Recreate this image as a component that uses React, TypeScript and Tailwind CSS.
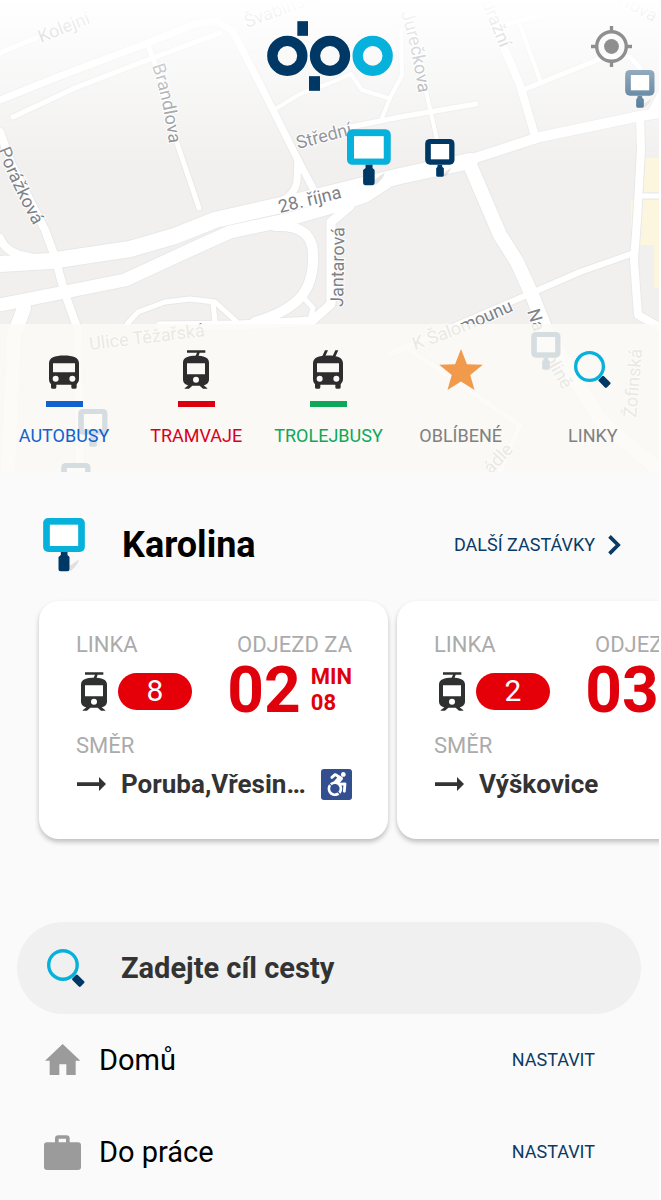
import type { ComponentType, SVGProps } from "react";
import { FaAccessibleIcon } from "react-icons/fa";

type IconProps = SVGProps<SVGSVGElement>;

const NAVY = "#003865";
const CYAN = "#06b1dc";

function Logo(props: IconProps) {
  return (
    <svg viewBox="0 0 378 209" fill="none" role="img" aria-label="dpo" {...props}>
      <g stroke={NAVY} strokeWidth={31}>
        <circle cx={61} cy={104} r={45} />
        <circle cx={189} cy={104} r={45} />
      </g>
      <circle cx={317} cy={104} r={45} stroke={CYAN} strokeWidth={31} />
      <rect x={91} width={32} height={44} fill={NAVY} />
      <rect x={126} y={165} width={33} height={44} fill={NAVY} />
    </svg>
  );
}

function LocateIcon(props: IconProps) {
  return (
    <svg viewBox="0 0 122 122" fill="none" aria-hidden="true" {...props}>
      <circle cx={61} cy={61} r={44} stroke="currentColor" strokeWidth={10} />
      <circle cx={61} cy={61} r={22} fill="currentColor" />
      <path d="M61 0v17M61 105v17M0 61h17M105 61h17" stroke="currentColor" strokeWidth={10} />
    </svg>
  );
}

function StopIcon({ frame = CYAN, handle = NAVY, ...props }: IconProps & { frame?: string; handle?: string }) {
  return (
    <svg viewBox="0 0 140 162" aria-hidden="true" {...props}>
      <path d="M79 158V144L108 124Q104 142 84 158z" fill="#000" opacity={0.1} />
      <rect width={125} height={102} rx={15} fill={frame} />
      <rect x={20} y={20} width={85} height={64} fill="#fff" />
      <path d="M53 102h20v9l6 6v37q0 6-6 6H52q-6 0-6-6v-37l7-6z" fill={handle} />
    </svg>
  );
}

// Same post as StopIcon, with the thicker and rounder frame used at small sizes.
function SmallStopIcon(props: IconProps) {
  return (
    <svg viewBox="0 0 98 114" width={33} height={38} fill={NAVY} aria-hidden="true" {...props}>
      <path d="M55 112V102L78 86Q76 98 60 112z" fill="#000" opacity={0.1} />
      <rect width={88} height={77} rx={14} />
      <rect x={17} y={15} width={55} height={46} fill="#fff" />
      <path d="M37 77h14v6l5 5v21q0 4-4 4H37q-4 0-4-4V88l4-5z" />
    </svg>
  );
}

function BusIcon(props: IconProps) {
  return (
    <svg viewBox="0 0 90 116" fill="currentColor" aria-hidden="true" {...props}>
      <path
        fillRule="evenodd"
        d="M45 16c28 0 45 6 45 24v46c0 8-3 12-7 16v9q0 5-5 5h-6q-5 0-5-5v-7H22v7q0 5-5 5h-6q-5 0-5-5v-9c-4-4-6-8-6-16V40C0 22 17 16 45 16zM12 39v27h66V39zM20 77a9 9 0 100 18 9 9 0 000-18zM70 77a9 9 0 100 18 9 9 0 000-18z"
      />
    </svg>
  );
}

function TrolleyIcon(props: IconProps) {
  return (
    <svg viewBox="0 0 90 116" fill="currentColor" aria-hidden="true" {...props}>
      <path d="M36 0h9l-9 20h-9zM67 0h9l-9 20h-9z" />
      <path
        fillRule="evenodd"
        d="M45 16c28 0 45 6 45 24v46c0 8-3 12-7 16v9q0 5-5 5h-6q-5 0-5-5v-7H22v7q0 5-5 5h-6q-5 0-5-5v-9c-4-4-6-8-6-16V40C0 22 17 16 45 16zM12 39v27h66V39zM20 77a9 9 0 100 18 9 9 0 000-18zM70 77a9 9 0 100 18 9 9 0 000-18z"
      />
    </svg>
  );
}

function TramIcon(props: IconProps) {
  return (
    <svg viewBox="0 0 78 116" fill="currentColor" aria-hidden="true" {...props}>
      <path d="M12 0h55v8H50l-4 11h-9l5-11H12z" />
      <path
        fillRule="evenodd"
        d="M39 17c22 0 39 5 39 20v51c0 9-6 16-16 17l11 9v2H60l-10-9H28l-10 9H5v-2l11-9C6 104 0 97 0 88V37c0-15 17-20 39-20zM12 39v33h54V39zM39 80a9 9 0 100 18 9 9 0 000-18z"
      />
    </svg>
  );
}

function StarIcon(props: IconProps) {
  return (
    <svg viewBox="0 0 132 124" fill="#f29a4b" aria-hidden="true" {...props}>
      <path d="M66 0l18 46 48 2-38 31 13 45-41-26-41 26 13-45L0 48l48-2z" />
    </svg>
  );
}

function SearchIcon(props: IconProps) {
  return (
    <svg viewBox="0 0 112 112" fill="none" aria-hidden="true" {...props}>
      <circle cx={47} cy={47} r={42} stroke={CYAN} strokeWidth={10} />
      <rect x={-11} y={-18} width={22} height={34} rx={4} fill={NAVY} transform="translate(93 94) rotate(-45)" />
    </svg>
  );
}

function ArrowIcon(props: IconProps) {
  return (
    <svg viewBox="0 0 87 42" fill="currentColor" aria-hidden="true" {...props}>
      <path d="M0 16h66V0l21 21-21 21V27H0z" />
    </svg>
  );
}

function ChevronIcon(props: IconProps) {
  return (
    <svg viewBox="0 0 38 60" fill="none" aria-hidden="true" {...props}>
      <path d="M4 4l26 26L4 56" stroke="currentColor" strokeWidth={11} />
    </svg>
  );
}

function HomeIcon(props: IconProps) {
  return (
    <svg viewBox="0 0 111 111" fill="currentColor" aria-hidden="true" {...props}>
      <path d="M56 6l53 50H95v43H67V67H46v32H17V56H3z" />
    </svg>
  );
}

function BriefcaseIcon(props: IconProps) {
  return (
    <svg viewBox="0 0 111 111" fill="currentColor" aria-hidden="true" {...props}>
      <path
        fillRule="evenodd"
        d="M33 25V14q0-10 10-10h24q10 0 10 10v11h25q9 0 9 9v65q0 9-9 9H9q-9 0-9-9V34q0-9 9-9zM44 14v11h22V14z"
      />
    </svg>
  );
}

const roads: { d: string; w: number }[] = [
  { d: "M0 53L36 38", w: 5 },
  { d: "M0 100L60 76L140 46L195 24L215 21L232 30L240 45L272 108L297 158L316 194", w: 7 },
  { d: "M298 160L297 180Q296 194 280 202", w: 7 },
  { d: "M13 117L75 88L150 59L220 33", w: 5 },
  { d: "M147 42L158 72L176 140L199 208", w: 5 },
  { d: "M0 132L12 165L45 230L55 257L63 287L69 305L78 330L80 472", w: 8 },
  { d: "M0 238Q6 254 30 257", w: 8 },
  { d: "M0 264L50 261L130 249L175 236L215 220L250 212L290 203L340 191L400 176L470 161", w: 16 },
  { d: "M460 164L475 158L540 137L640 116L661 113", w: 10 },
  { d: "M0 305L60 293L125 280L190 250L230 232L290 219L335 206L365 196L385 183", w: 13 },
  { d: "M275 226Q313 224 313 255Q314 282 300 298Q284 314 255 322", w: 10 },
  { d: "M24 308L14 335L8 472", w: 14 },
  { d: "M303 297L313 308L310 320", w: 5 },
  { d: "M127 324L138 312L165 302L190 299L215 302L237 322", w: 5 },
  { d: "M213 303L215 322", w: 5 },
  { d: "M160 326L240 325L312 321L331 304L331 222L350 206", w: 9 },
  { d: "M277 108L300 94L330 83L351 74L362 90L388 98", w: 4 },
  { d: "M401 30L402 75L390 98L382 118", w: 4 },
  { d: "M345 128L400 117L476 104", w: 5 },
  { d: "M412 30L428 100L437 140", w: 4 },
  { d: "M485 0L503 45L520 85L535 136", w: 8 },
  { d: "M523 90L560 75L605 57L630 57L640 68", w: 5 },
  { d: "M520 25L540 80", w: 4 },
  { d: "M505 25L540 15", w: 4 },
  { d: "M470 165L485 200L500 235L517 262L532 295L548 335L600 420L661 472", w: 14 },
  { d: "M390 354L520 298L580 272L634 253", w: 6 },
  { d: "M640 116L641 150L637 220L634 260L638 315L661 328", w: 8 },
  { d: "M640 196L661 196", w: 5 },
  { d: "M661 95L652 112", w: 8 },
  { d: "M410 350L520 425L500 472", w: 5 },
];

const streets = [
  { id: "kolejni", name: "Kolejní", d: "M41 43L120 11" },
  { id: "svabinskeho", name: "Švabinského", d: "M247 28L350 -10" },
  { id: "brandlova", name: "Brandlova", d: "M152 66Q165 104 171 160" },
  { id: "porazkova", name: "Porážková", d: "M-2 150Q14 192 44 244" },
  { id: "stredni", name: "Střední", d: "M298 149L370 130" },
  { id: "rijna", name: "28. října", d: "M280 213L370 191" },
  { id: "jureckova", name: "Jurečkova", d: "M401 13Q413 50 421 110" },
  { id: "nadrazni", name: "Nádražní", d: "M473 -18L510 72" },
  { id: "jantarova", name: "Jantarová", d: "M343 307L345 200" },
  { id: "tezarska", name: "Ulice Těžařská", d: "M90 350L240 332" },
  { id: "salomounu", name: "K Šalomounu", d: "M415 350Q470 332 540 298" },
  { id: "naokoline", name: "Na Okolině", d: "M527 311Q541 362 580 415" },
  { id: "zofinska", name: "Žofinská", d: "M636 418L644 330" },
  { id: "zahradle", name: "ádle", d: "M491 475L541 421" },
  { id: "nova", name: "Nova", d: "M617 3L675 34" },
];

function MapBackdrop() {
  return (
    <svg
      viewBox="0 0 659 472"
      preserveAspectRatio="xMidYMid slice"
      className="absolute inset-0 size-full"
      aria-hidden="true"
    >
      <defs>
        <linearGradient id="fade" x1="0" y1="0" x2="0" y2="1">
          <stop offset="0" stopColor="#fff" />
          <stop offset="1" stopColor="#fff" stopOpacity={0} />
        </linearGradient>
        {streets.map((street) => (
          <path key={street.id} id={street.id} d={street.d} />
        ))}
      </defs>
      <rect width={661} height={472} fill="#f1f0ef" />
      <path d="M644 158h17v34h-17zM631 200h30v88h-7v-43h-23z" fill="#fdf6df" />
      <g fill="none" strokeLinejoin="round" strokeLinecap="round">
        {roads.map((road) => (
          <path key={road.d} d={road.d} stroke="#e8e8e8" strokeWidth={road.w + 2} />
        ))}
        {roads.map((road) => (
          <path key={road.d} d={road.d} stroke="#fff" strokeWidth={road.w} />
        ))}
      </g>
      <g fontSize={18} fill="#7d8186" stroke="#fff" strokeWidth={2} paintOrder="stroke">
        {streets.map((street) => (
          <text key={street.id}>
            <textPath href={`#${street.id}`}>{street.name}</textPath>
          </text>
        ))}
      </g>
      <SmallStopIcon x={625} y={70} />
      <SmallStopIcon x={531} y={332} />
      <SmallStopIcon x={78} y={409} />
      <SmallStopIcon x={61} y={463} />
      <rect width={661} height={165} fill="url(#fade)" />
      <SmallStopIcon x={425} y={139} />
      <StopIcon x={347} y={129} width={49} height={57} />
    </svg>
  );
}

type Mode = {
  label: string;
  icon: ComponentType<IconProps>;
  iconClass: string;
  textClass: string;
  barClass: string;
};

const modes: Mode[] = [
  { label: "AUTOBUSY", icon: BusIcon, iconClass: "h-[39px] w-[30px]", textClass: "text-[#0f62d0]", barClass: "bg-[#0f62d0]" },
  { label: "TRAMVAJE", icon: TramIcon, iconClass: "h-[39px] w-[26px]", textClass: "text-[#d9001b]", barClass: "bg-[#dc000f]" },
  { label: "TROLEJBUSY", icon: TrolleyIcon, iconClass: "h-[39px] w-[30px]", textClass: "text-[#0fa858]", barClass: "bg-[#0fa858]" },
  { label: "OBLÍBENÉ", icon: StarIcon, iconClass: "h-[41px] w-[44px]", textClass: "text-[#808080]", barClass: "bg-transparent" },
  { label: "LINKY", icon: SearchIcon, iconClass: "h-[37px] w-[37px]", textClass: "text-[#808080]", barClass: "bg-transparent" },
];

function ModeNav() {
  return (
    <nav className="-ml-0.5 grid h-[148px] grid-cols-5 bg-[#fbfaf6]/85">
      {modes.map(({ label, icon: Icon, iconClass, textClass, barClass }) => (
        <button key={label} type="button" className={`flex flex-col items-center pt-[23px] text-lg leading-6 ${textClass}`}>
          <span className="flex h-11 items-center text-[#2d2d2d]">
            <Icon className={iconClass} />
          </span>
          <span className={`mt-[10px] h-[6px] w-[37px] ${barClass}`} />
          <span className="mt-[17px]">{label}</span>
        </button>
      ))}
    </nav>
  );
}

type Departure = {
  line: string;
  minutes: string;
  seconds: string;
  direction: string;
  accessible: boolean;
};

const departures: Departure[] = [
  { line: "8", minutes: "02", seconds: "08", direction: "Poruba,Vřesinská", accessible: true },
  { line: "2", minutes: "03", seconds: "08", direction: "Výškovice", accessible: false },
];

function DepartureCard({ line, minutes, seconds, direction, accessible }: Departure) {
  return (
    <article className="w-[349px] shrink-0 rounded-[20px] bg-white pt-[30px] pr-9 pb-[37px] pl-[37px] shadow-[0_3px_5px_rgba(0,0,0,0.24)]">
      <div className="flex justify-between text-[22px] leading-7 text-[#ababab]">
        <span>LINKA</span>
        <span>ODJEZD ZA</span>
      </div>
      <div className="flex h-16 items-center justify-between">
        <div className="flex items-center gap-[11px] pl-[5px] text-[#2f3030]">
          <TramIcon className="h-[39px] w-[26px]" />
          <span className="flex h-[37px] w-[74px] items-center justify-center rounded-full bg-[#e50009] text-[30px] leading-none text-white">
            {line}
          </span>
        </div>
        <div className="flex items-center gap-[10px] font-bold text-[#e0000b]">
          <span className="text-[64px] leading-none">{minutes}</span>
          <span className="flex flex-col pb-[3px] text-[22px] leading-[26px]">
            <span>MIN</span>
            <span>{seconds}</span>
          </span>
        </div>
      </div>
      <div className="mt-[9px] text-[22px] leading-7 text-[#ababab]">SMĚR</div>
      <div className="mt-[6px] flex h-9 items-center">
        <ArrowIcon className="ml-px h-[14px] w-[29px] shrink-0 text-[#333]" />
        <span className="mr-2 ml-[15px] min-w-0 flex-1 truncate text-[26px] leading-9 font-bold text-[#333]">{direction}</span>
        {accessible && (
          <span className="flex size-[31px] shrink-0 items-center justify-center rounded-[3px] bg-[#334f8f] text-white">
            <FaAccessibleIcon className="size-6" title="Bezbariérový spoj" />
          </span>
        )}
      </div>
    </article>
  );
}

const places = [
  { label: "Domů", icon: HomeIcon },
  { label: "Do práce", icon: BriefcaseIcon },
];

export default function App() {
  return (
    <div className="min-h-screen overflow-x-hidden border-r-2 border-white bg-[#fafafa] font-[Roboto,sans-serif]">
      <header className="relative isolate flex min-h-[472px] flex-col justify-between overflow-hidden">
        <MapBackdrop />
        <div className="relative grid grid-cols-[1fr_auto_1fr] items-start px-[27px] pt-[21px]">
          <span />
          <Logo className="h-[70px] w-[126px]" />
          <button type="button" aria-label="Moje poloha" className="mt-[5px] justify-self-end text-[#8f8f8f]">
            <LocateIcon className="size-[41px]" />
          </button>
        </div>
        <div className="relative">
          <ModeNav />
        </div>
      </header>

      <main>
        <section>
          <div className="flex items-center pt-[45px] pr-[38px] pl-[43px]">
            <StopIcon className="h-[54px] w-[47px]" />
            <h1 className="ml-8 text-[36px] leading-[56px] font-bold text-black">Karolina</h1>
            <a href="#zastavky" className="ml-auto flex items-center gap-[13px] text-lg leading-6 text-[#0b3a66]">
              DALŠÍ ZASTÁVKY
              <ChevronIcon className="h-5 w-[13px]" />
            </a>
          </div>
          <div className="flex gap-[9px] overflow-hidden pt-7 pb-4 pl-[39px]">
            {departures.map((departure) => (
              <DepartureCard key={departure.line} {...departure} />
            ))}
          </div>
        </section>

        <section className="pt-[67px]">
          <label className="ml-[17px] mr-[18px] flex h-[92px] items-center rounded-full bg-[#f0f0f0] pl-[30px]">
            <SearchIcon className="size-[38px] shrink-0" />
            <input
              type="text"
              aria-label="Cíl cesty"
              placeholder="Zadejte cíl cesty"
              className="ml-9 min-w-0 flex-1 bg-transparent text-[29px] leading-9 font-bold outline-none placeholder:text-[#333]"
            />
          </label>
          <ul>
            {places.map(({ label, icon: Icon }) => (
              <li key={label} className="flex h-[92px] items-center pr-[64px] pl-[44px]">
                <Icon className="size-[37px] text-[#9b9b9b]" />
                <span className="ml-[18px] text-[29px] leading-9 text-black">{label}</span>
                <button type="button" className="ml-auto text-lg leading-6 text-[#0b3a66]">
                  NASTAVIT
                </button>
              </li>
            ))}
          </ul>
        </section>
      </main>
    </div>
  );
}
